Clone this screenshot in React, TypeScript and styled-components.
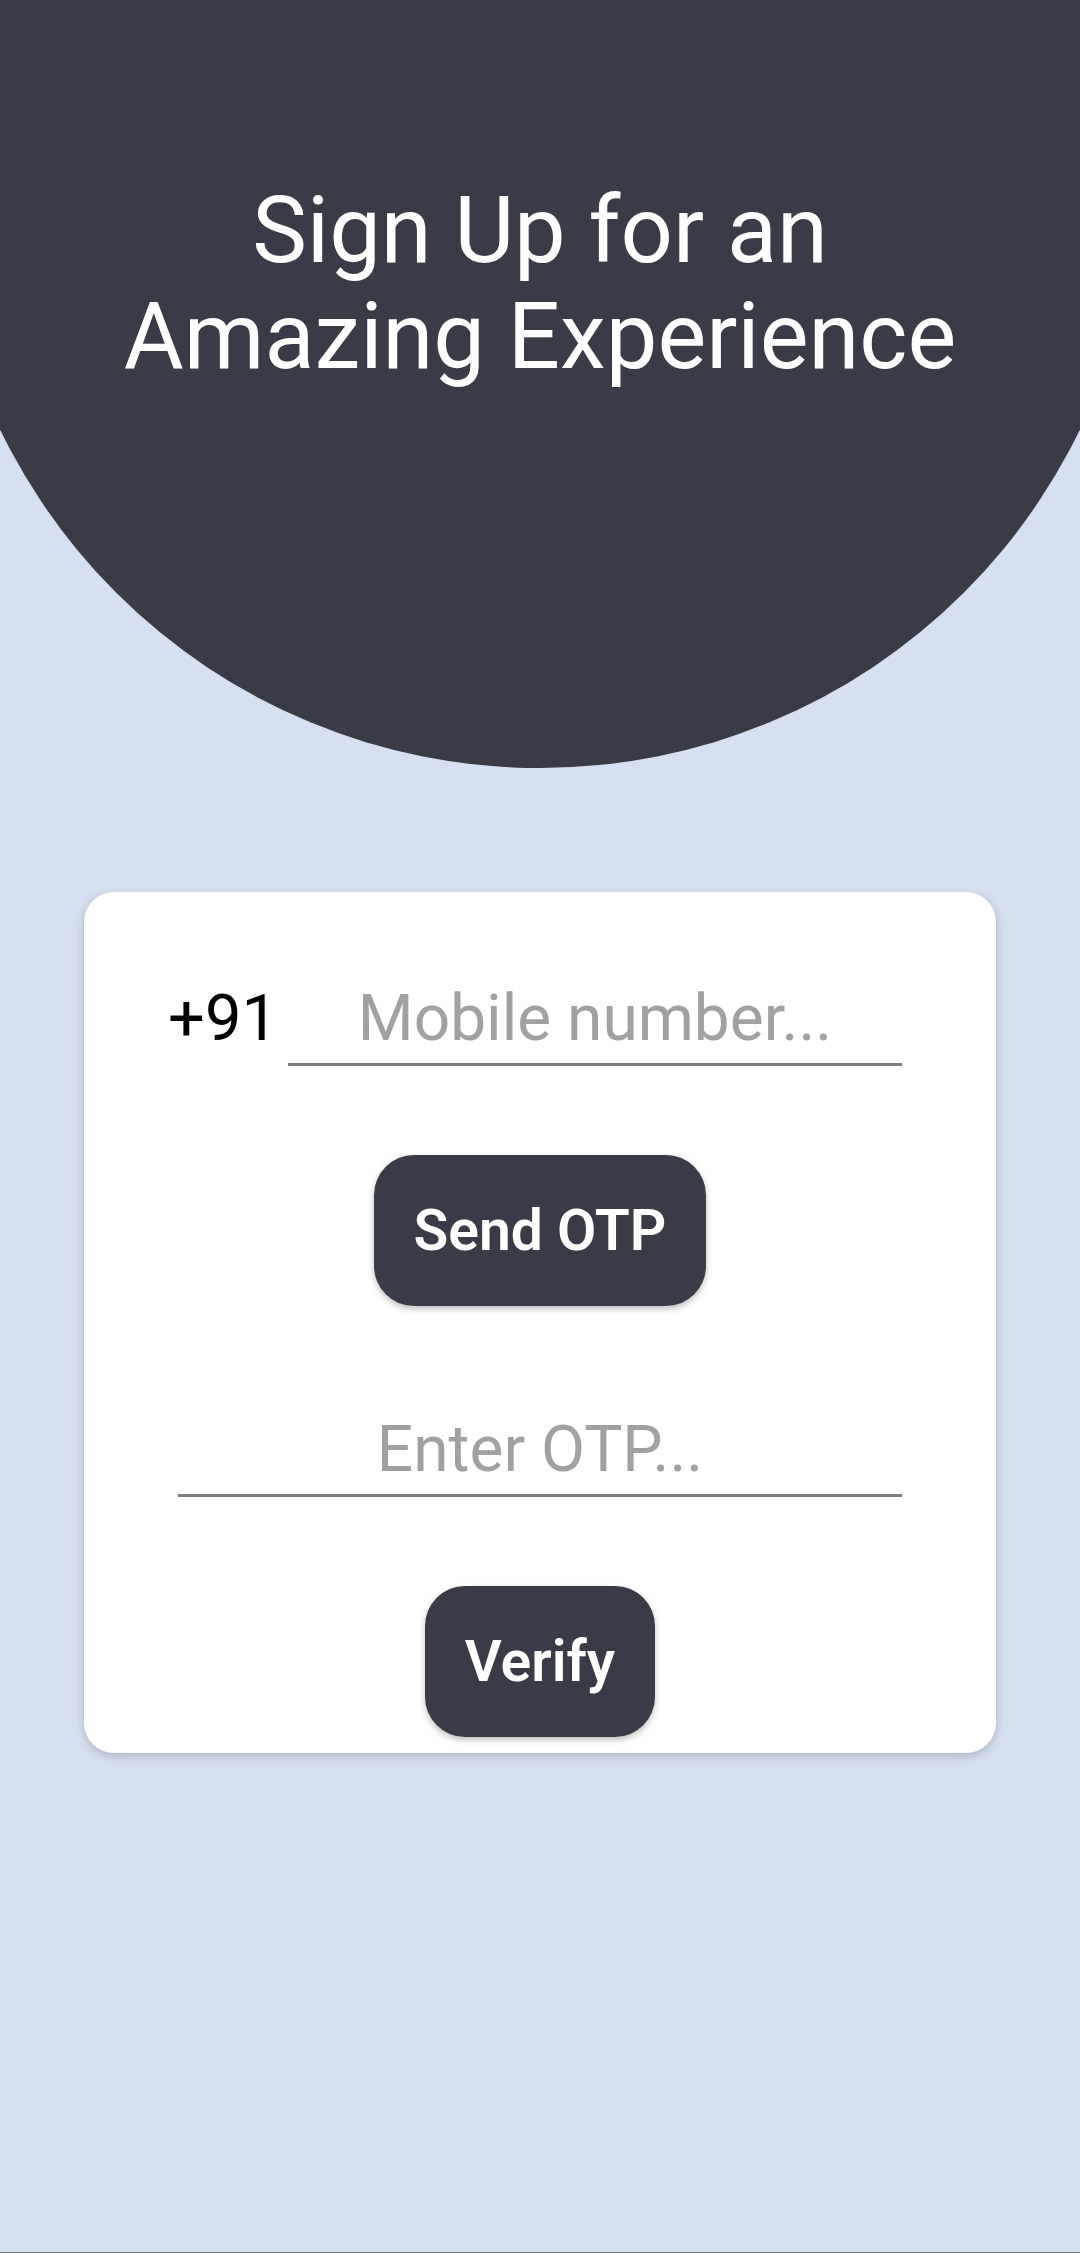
import React from "react";
import styled, { createGlobalStyle } from "styled-components";

const GlobalStyle = createGlobalStyle`
  html, body {
    margin: 0;
    padding: 0;
    background: #d7e0f0;
  }
  body {
    font-family: Roboto, "Noto Sans", "Liberation Sans", sans-serif;
  }
  * { box-sizing: border-box; }
`;

const Page = styled.div`
  min-height: 2253px;
  display: flex;
  flex-direction: column;
  align-items: center;
  overflow: hidden;
  background: #d7e0f0;
  border-bottom: 1px solid #70757f;
`;

const Hero = styled.header`
  flex-shrink: 0;
  width: 1200px;
  height: 1200px;
  margin-top: -432px;
  padding-top: 610px;
  border-radius: 50%;
  background: #393b46;
  display: flex;
  justify-content: center;
`;

const Title = styled.h1`
  margin: 0;
  color: #ffffff;
  font-family: Roboto, "Noto Sans", "Liberation Sans", sans-serif;
  font-weight: 400;
  font-size: 92px;
  line-height: 106px;
  text-align: center;
`;

const Card = styled.section`
  margin-top: 124px;
  width: 912px;
  background: #ffffff;
  border-radius: 30px;
  box-shadow: 0 3px 8px rgba(60, 70, 90, 0.28);
  padding: 81px 94px 16px;
  display: flex;
  flex-direction: column;
  align-items: center;
`;

const PhoneRow = styled.div`
  align-self: stretch;
  margin-left: -10px;
  display: flex;
  align-items: flex-start;
  gap: 10px;
`;

const Prefix = styled.span`
  font-size: 65px;
  line-height: 90px;
  height: 90px;
  color: #000000;
`;

const Field = styled.input<{ $grow?: boolean }>`
  ${(p) => (p.$grow ? "flex: 1;" : "width: 100%;")}
  min-width: 0;
  height: 93px;
  padding: 0;
  border: none;
  border-bottom: 3px solid #7b7b7b;
  background: transparent;
  font-family: Roboto, "Noto Sans", "Liberation Sans", sans-serif;
  font-size: 64px;
  color: #222;
  text-align: center;
  outline: none;
  &::placeholder {
    color: #a1a1a1;
  }
`;

const ActionButton = styled.button<{ $top: number }>`
  margin-top: ${(p) => p.$top}px;
  height: 151px;
  padding: 0 40px;
  border: none;
  border-radius: 40px;
  background: #393b46;
  color: #ffffff;
  font-family: Roboto, "Noto Sans", "Liberation Sans", sans-serif;
  font-weight: 600;
  font-size: 57px;
  box-shadow: 0 3px 6px rgba(0, 0, 0, 0.25);
  cursor: pointer;
`;

const OtpField = styled(Field)`
  margin-top: 98px;
`;

export default function App() {
  return (
    <>
      <GlobalStyle />
      <Page>
        <Hero>
          <Title>
            Sign Up for an
            <br />
            Amazing Experience
          </Title>
        </Hero>
        <Card>
          <PhoneRow>
            <Prefix>+91</Prefix>
            <Field $grow type="tel" placeholder="Mobile number..." />
          </PhoneRow>
          <ActionButton $top={89}>Send OTP</ActionButton>
          <OtpField type="text" placeholder="Enter OTP..." />
          <ActionButton $top={89}>Verify</ActionButton>
        </Card>
      </Page>
    </>
  );
}
